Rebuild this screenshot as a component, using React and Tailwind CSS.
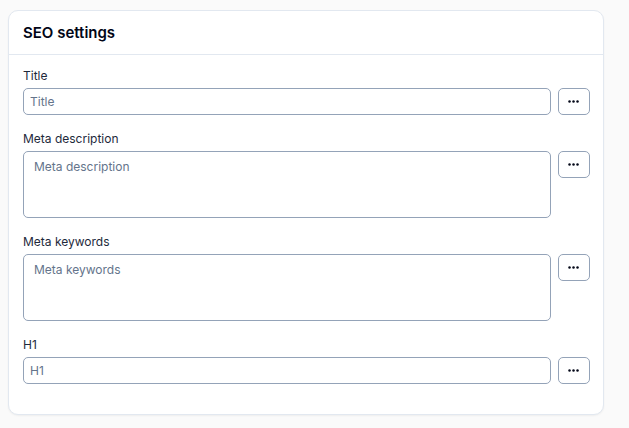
function Dots() {
  return (
    <svg width="12" height="3" viewBox="0 0 12 3" fill="currentColor" aria-hidden="true">
      <circle cx="1.5" cy="1.5" r="1.25" />
      <circle cx="5.5" cy="1.5" r="1.25" />
      <circle cx="9.5" cy="1.5" r="1.25" />
    </svg>
  );
}

function Field({ id, label, multiline }) {
  return (
    <div>
      <label htmlFor={id} className="block text-[12px] leading-4 text-[#1e293b]">
        {label}
      </label>
      <div className="mt-1 flex items-start gap-[7px]">
        {multiline ? (
          <textarea
            id={id}
            placeholder={label}
            className="block h-[67px] min-w-0 flex-1 resize-none rounded-[5px] border border-[#94a3b8] bg-white px-[10px] py-[6px] text-[12px] leading-[18px] text-[#1e293b] placeholder:text-[#64748b]"
          />
        ) : (
          <input
            id={id}
            type="text"
            placeholder={label}
            className="block h-[27px] min-w-0 flex-1 rounded-[5px] border border-[#94a3b8] bg-white px-[6px] text-[12px] leading-[18px] text-[#1e293b] placeholder:text-[#64748b]"
          />
        )}
        <button
          type="button"
          aria-label={`${label} options`}
          className="flex h-[27px] w-8 shrink-0 items-center justify-center rounded-[5px] border border-[#94a3b8] bg-white text-[#020617]"
        >
          <Dots />
        </button>
      </div>
    </div>
  );
}

export default function App() {
  return (
    <div className="min-h-screen bg-[#fafafa] pt-[10px] pr-[25px] pb-[13px] pl-2 font-['Inter',sans-serif]">
      <section className="rounded-[10px] border border-[#e2e8f0] bg-white shadow-xs">
        <header className="border-b border-[#e2e8f0] px-[14px] py-[11px]">
          <h2 className="text-[15px] leading-[21px] font-semibold text-[#020617]">SEO settings</h2>
        </header>
        <form className="flex flex-col gap-4 pt-[13px] pr-[13px] pb-[30px] pl-[14px]">
          <Field id="title" label="Title" />
          <Field id="description" label="Meta description" multiline />
          <Field id="keywords" label="Meta keywords" multiline />
          <Field id="h1" label="H1" />
        </form>
      </section>
    </div>
  );
}
